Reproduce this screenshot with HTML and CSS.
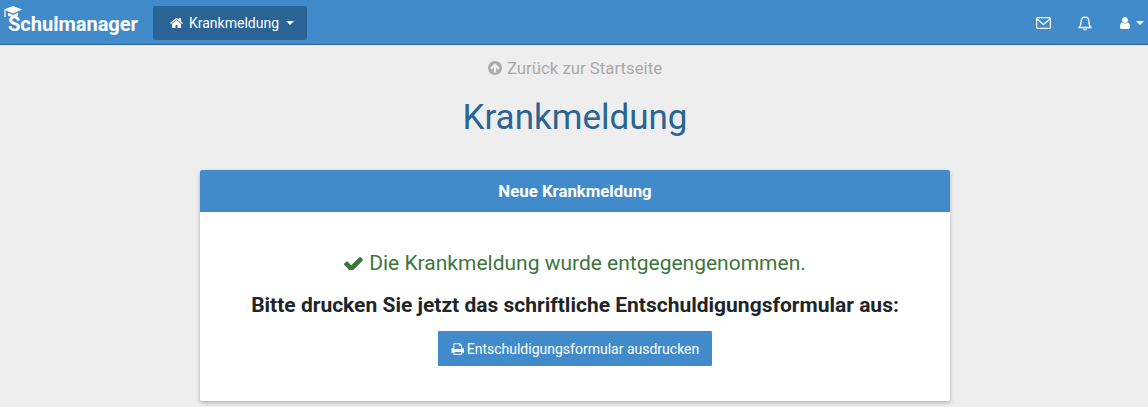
FILE: index.html
```html
<!DOCTYPE html>
<html lang="de">
<head>
<meta charset="utf-8">
<title>Krankmeldung</title>
<link rel="stylesheet" href="styles.css">
</head>
<body>
<nav class="navbar">
  <a class="brand">
    <svg class="brand-cap" viewBox="0 0 18 13" width="18" height="13"><path d="M9 0 18 3.600 9 7.400 0 3.600Z" fill="#fff"/><path d="M4 6.800V9.800C6 11.400 12 11.400 14 9.800V6.800L9 8.900Z" fill="#fff"/><path d="M1 4V11" stroke="#fff" stroke-width="1.200"/></svg>
    <span>Schulmanager</span>
  </a>
  <button class="nav-active">
    <svg class="icon-home" viewBox="0 0 1664 1792" width="13" height="14"><path fill="#fff" d="M1408 992v480q0 26-19 45t-45 19H960v-384H704v384H320q-26 0-45-19t-19-45V992q0-1 .5-3t.5-3l575-474 575 474q1 2 1 6zm223-69-62 74q-8 9-21 11h-3q-13 0-21-7L832 424 140 1001q-12 8-24 7-13-2-21-11l-62-74q-8-10-7-23.500t11-21.500L756 280q32-26 76-26t76 26l254 212V288q0-14 9-23t23-9h192q14 0 23 9t9 23v408l219 182q10 8 11 21.500t-7 23.500z"/></svg>
    <span>Krankmeldung</span>
    <i class="caret"></i>
  </button>
  <div class="nav-right">
    <svg class="nav-icon" viewBox="0 0 15 12" width="15" height="12"><rect x=".6" y=".6" width="13.800" height="10.800" rx="1" fill="none" stroke="#fff" stroke-width="1.200"/><path d="M1 2 7.500 7.500 14 2" fill="none" stroke="#fff" stroke-width="1.200"/></svg>
    <svg class="nav-icon" viewBox="0 0 14 15" width="14" height="15"><path d="M7 1.200C4.600 1.200 3.200 3 3.200 5.400 3.200 8.600 2.400 10 1 11.500H13C11.600 10 10.800 8.600 10.800 5.400 10.800 3 9.400 1.200 7 1.200Z" fill="none" stroke="#fff" stroke-width="1.300" stroke-linejoin="round"/><path d="M5.500 12.600C5.800 14 8.200 14 8.500 12.600" fill="none" stroke="#fff" stroke-width="1.200"/></svg>
    <div class="user">
      <svg viewBox="128 128 1408 1536" width="11" height="12"><path fill="#fff" d="M1536 1399q0 109-62.500 187t-150.500 78h-854q-88 0-150.500-78t-62.500-187q0-85 8.500-160.500t31.500-152 58.500-131 94-89 134.500-34.500q131 128 313 128t313-128q76 0 134.500 34.500t94 89 58.500 131 31.500 152 8.500 160.500zm-256-887q0 159-112.500 271.500t-271.500 112.500-271.500-112.500-112.500-271.500 112.500-271.500 271.500-112.500 271.500 112.500 112.500 271.500z"/></svg>
      <i class="caret"></i>
    </div>
  </div>
</nav>
<main class="page">
  <a class="back">
    <svg viewBox="128 128 1536 1536" width="14" height="14"><path fill="#aaa" d="M1412 897q0-27-18-45l-91-91-362-362q-18-18-45-18t-45 18l-362 362-91 91q-18 18-18 45t18 45l91 91q18 18 45 18t45-18l189-189v502q0 26 19 45t45 19h128q26 0 45-19t19-45v-502l189 189q19 19 45 19t45-19l91-91q18-18 18-45zm252-1q0 209-103 385.500t-279.500 279.500-385.500 103-385.500-103-279.500-279.500-103-385.500 103-385.500 279.500-279.500 385.500-103 385.500 103 279.500 279.500 103 385.500z"/></svg>
    <span>Zurück zur Startseite</span>
  </a>
  <h1 class="title">Krankmeldung</h1>
  <section class="card">
    <header class="card-head">Neue Krankmeldung</header>
    <div class="card-body">
      <p class="success">
        <svg viewBox="120 260 1560 1130" width="19" height="14"><path fill="#3c763d" d="M1671 566q0 40-28 68l-724 724-136 136q-28 28-68 28t-68-28l-136-136-362-362q-28-28-28-68t28-68l136-136q28-28 68-28t68 28l294 295 656-657q28-28 68-28t68 28l136 136q28 28 28 68z"/></svg>
        <span>Die Krankmeldung wurde entgegengenommen.</span>
      </p>
      <p class="notice">Bitte drucken Sie jetzt das schriftliche Entschuldigungsformular aus:</p>
      <button class="print">
        <svg viewBox="0 128 1728 1536" width="13" height="12"><path fill="#fff" d="M448 1536h896v-256h-896v256zm0-640h896v-384h-160q-40 0-68-28t-28-68v-160h-640v640zm1152 64q0-26-19-45t-45-19-45 19-19 45 19 45 45 19 45-19 19-45zm128 0v416q0 13-9.500 22.500t-22.500 9.500h-224v160q0 40-28 68t-68 28h-960q-40 0-68-28t-28-68v-160h-224q-13 0-22.500-9.500t-9.500-22.500v-416q0-79 56.500-135.500t135.500-56.500h64v-544q0-40 28-68t68-28h672q40 0 88 20t76 48l152 152q28 28 48 76t20 88v256h64q79 0 135.500 56.500t56.500 135.500z"/></svg>
        <span>Entschuldigungsformular ausdrucken</span>
      </button>
    </div>
  </section>
</main>
</body>
</html>
```
FILE: styles.css
```css
* { box-sizing: border-box; }
html, body { margin: 0; height: 100%; overflow: hidden; }
body { background: #eee; font-family: Roboto, "Liberation Sans", sans-serif; color: #212529; }
.navbar { height: 45px; background: #428bca; border-bottom: 1px solid #2b5f8e; display: flex; align-items: center; padding: 0 4px 0 8px; color: #fff; }
.brand { position: relative; width: 145px; display: flex; font-size: 20px; font-weight: 700; line-height: 24px; margin-top: 4px; }
.brand-cap { position: absolute; left: -4px; top: -6px; }
.nav-active { display: flex; align-items: center; height: 34px; width: 154px; padding: 0 0 0 17px; margin-top: 2px; background: #2a6496; border: 0; border-radius: 2px; color: #fff; font: 14px Roboto, sans-serif; }
.icon-home { margin-right: 6px; }
.caret { display: inline-block; margin-left: 7px; border-top: 4px solid #fff; border-left: 4px solid transparent; border-right: 4px solid transparent; }
.nav-right { margin-left: auto; display: flex; align-items: center; gap: 27px; margin-top: 2px; }
.user { display: flex; align-items: center; }
.user .caret { margin-left: 6px; }
.page { display: flex; flex-direction: column; align-items: center; padding-left: 2px; }
.back { display: flex; align-items: center; gap: 5px; margin-top: 13px; font-size: 16.800px; line-height: 20px; color: #aaa; }
.title { margin: 19px 0 0; font-size: 35px; font-weight: 400; line-height: 41px; color: #2a6496; }
.card { width: 750px; margin-top: 32px; background: #fff; border-radius: 2px; box-shadow: 0 2px 4px rgba(0,0,0,.25); }
.card-head { height: 42px; background: #428bca; color: #fff; font-size: 16.800px; font-weight: 700; line-height: 42px; text-align: center; border-radius: 2px 2px 0 0; }
.card-body { height: 189px; display: flex; flex-direction: column; align-items: center; padding-top: 39px; }
.success { display: flex; align-items: center; gap: 6px; margin: 0; font-size: 21px; line-height: 24px; color: #3c763d; }
.notice { margin: 18px 0 0; font-size: 21px; font-weight: 700; line-height: 24px; color: #212529; }
.print { display: flex; align-items: center; justify-content: center; gap: 3px; width: 274px; height: 35px; margin-top: 14px; background: #428bca; border: 0; border-radius: 1px; color: #fff; font: 14px Roboto, sans-serif; }
```
